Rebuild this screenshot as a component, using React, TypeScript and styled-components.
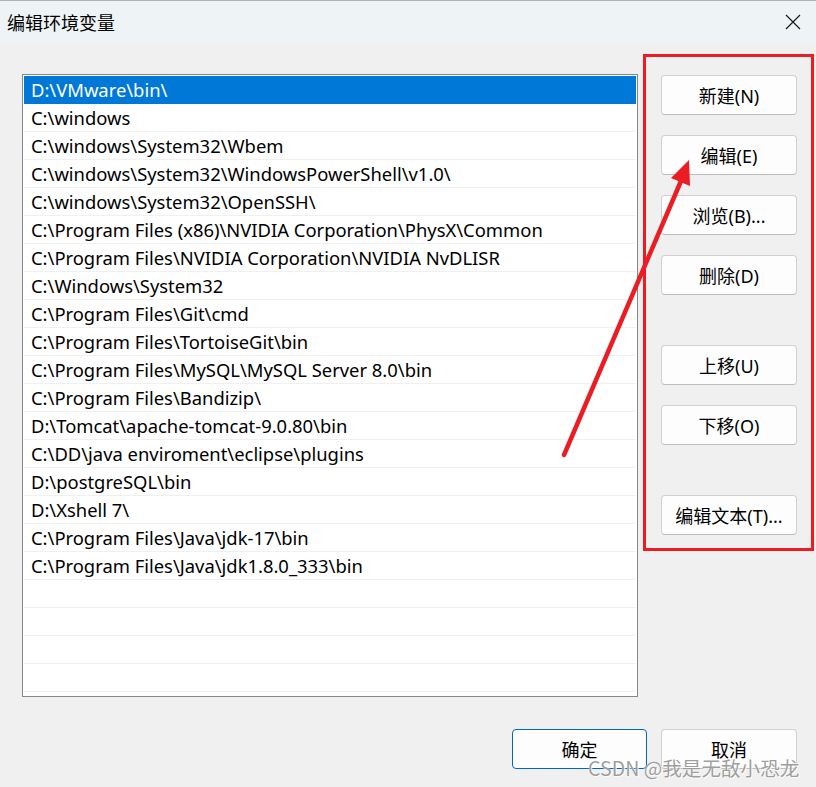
import styled, { createGlobalStyle } from "styled-components";

const GlobalStyle = createGlobalStyle`
  html, body {
    margin: 0;
    padding: 0;
    background: #f0f0f0;
  }
`;

const uiFont = `"Noto Sans", "Noto Sans CJK SC", sans-serif`;

const Window = styled.div`
  position: relative;
  width: 816px;
  height: 787px;
  display: flex;
  flex-direction: column;
  background: #f0f0f0;
  font-family: ${uiFont};
  color: #000;
  overflow: hidden;
`;

const TitleBar = styled.div`
  flex: none;
  height: 43px;
  box-sizing: border-box;
  display: flex;
  align-items: center;
  justify-content: space-between;
  padding: 0 15px 0 7px;
  background: #eef4f5;
  border-top: 1px solid #b0b0b0;
`;

const Title = styled.span`
  font-family: "Noto Sans CJK SC", sans-serif;
  font-size: 18px;
  line-height: 1;
`;

const CloseBtn = styled.button`
  width: 16px;
  height: 16px;
  padding: 0;
  border: none;
  background: none;
  display: flex;
  align-items: center;
  justify-content: center;
`;

const Main = styled.div`
  flex: none;
  height: 654px;
  display: flex;
  align-items: flex-start;
  padding-left: 22px;
`;

const ListBox = styled.div`
  margin-top: 31px;
  width: 616px;
  height: 623px;
  box-sizing: border-box;
  border: 1px solid #828790;
  background: #fff;
  padding: 1px;
  overflow: hidden;
`;

const Row = styled.div<{ $selected?: boolean }>`
  height: 28px;
  box-sizing: border-box;
  padding: 1px 0 0 7px;
  border-bottom: 1px solid ${(p) => (p.$selected ? "#0078d7" : "#f0f0f0")};
  background: ${(p) => (p.$selected ? "#0078d7" : "#fff")};
  color: ${(p) => (p.$selected ? "#fff" : "#000")};
  font-size: 18.4px;
  line-height: 26px;
  white-space: nowrap;
`;

const SidePanel = styled.div`
  margin: 11px 0 0 5px;
  width: 171px;
  height: 497px;
  box-sizing: border-box;
  border: 3px solid #ec1c24;
  padding: 18px 0 0 15px;
  display: flex;
  flex-direction: column;
  align-items: flex-start;
  gap: 20px;
`;

const Button = styled.button<{ $spaced?: boolean; $primary?: boolean }>`
  flex: none;
  width: ${(p) => (p.$primary ? "135px" : "136px")};
  height: 40px;
  margin-top: ${(p) => (p.$spaced ? "30px" : "0")};
  box-sizing: border-box;
  border: 1px solid ${(p) => (p.$primary ? "#0067c0" : "#d0d0d0")};
  border-bottom-color: ${(p) => (p.$primary ? "#0067c0" : "#bdbdbd")};
  border-radius: 4px;
  background: #fdfdfd;
  font-family: ${uiFont};
  font-size: 18px;
  color: #000;
  padding: 0;
`;

const Footer = styled.div`
  margin-top: 32px;
  display: flex;
  justify-content: flex-end;
  gap: 14px;
  padding-right: 19px;
`;

const Watermark = styled.span`
  position: absolute;
  left: 588px;
  top: 754px;
  font-family: "Noto Sans CJK SC", sans-serif;
  font-size: 19.6px;
  line-height: 28px;
  color: rgba(140, 140, 140, 0.85);
  text-shadow: 0 0 1px #fff, 1px 1px 0 rgba(255, 255, 255, 0.8);
  white-space: nowrap;
  pointer-events: none;
`;

const Overlay = styled.svg`
  position: absolute;
  left: 0;
  top: 0;
  pointer-events: none;
`;

const paths = [
  "D:\\VMware\\bin\\",
  "C:\\windows",
  "C:\\windows\\System32\\Wbem",
  "C:\\windows\\System32\\WindowsPowerShell\\v1.0\\",
  "C:\\windows\\System32\\OpenSSH\\",
  "C:\\Program Files (x86)\\NVIDIA Corporation\\PhysX\\Common",
  "C:\\Program Files\\NVIDIA Corporation\\NVIDIA NvDLISR",
  "C:\\Windows\\System32",
  "C:\\Program Files\\Git\\cmd",
  "C:\\Program Files\\TortoiseGit\\bin",
  "C:\\Program Files\\MySQL\\MySQL Server 8.0\\bin",
  "C:\\Program Files\\Bandizip\\",
  "D:\\Tomcat\\apache-tomcat-9.0.80\\bin",
  "C:\\DD\\java enviroment\\eclipse\\plugins",
  "D:\\postgreSQL\\bin",
  "D:\\Xshell 7\\",
  "C:\\Program Files\\Java\\jdk-17\\bin",
  "C:\\Program Files\\Java\\jdk1.8.0_333\\bin",
];

const actions = [
  { label: "新建(N)" },
  { label: "编辑(E)" },
  { label: "浏览(B)..." },
  { label: "删除(D)" },
  { label: "上移(U)", spaced: true },
  { label: "下移(O)" },
  { label: "编辑文本(T)...", spaced: true },
];

const App = () => {
  return (
    <Window>
      <GlobalStyle />
      <TitleBar>
        <Title>编辑环境变量</Title>
        <CloseBtn aria-label="close">
          <svg width="16" height="16" viewBox="0 0 16 16">
            <path d="M1 1 L15 15 M15 1 L1 15" stroke="#1a1a1a" strokeWidth="1.2" />
          </svg>
        </CloseBtn>
      </TitleBar>

      <Main>
        <ListBox>
          {paths.map((p, i) => (
            <Row key={p} $selected={i === 0}>
              {p}
            </Row>
          ))}
          {[0, 1, 2, 3, 4].map((n) => (
            <Row key={`empty-${n}`} />
          ))}
        </ListBox>

        <SidePanel>
          {actions.map((a) => (
            <Button key={a.label} $spaced={a.spaced}>
              {a.label}
            </Button>
          ))}
        </SidePanel>
      </Main>

      <Footer>
        <Button $primary>确定</Button>
        <Button>取消</Button>
      </Footer>

      <Watermark>CSDN @我是无敌小恐龙</Watermark>

      {/* red pointer arrow drawn over the dialog */}
      <Overlay width="816" height="787" viewBox="0 0 816 787">
        <line x1="564" y1="455" x2="681" y2="181" stroke="#ec1c24" strokeWidth="4.5" strokeLinecap="round" />
        <polygon points="689,160 671,178 690,186" fill="#ec1c24" />
      </Overlay>
    </Window>
  );
};

export default App;
